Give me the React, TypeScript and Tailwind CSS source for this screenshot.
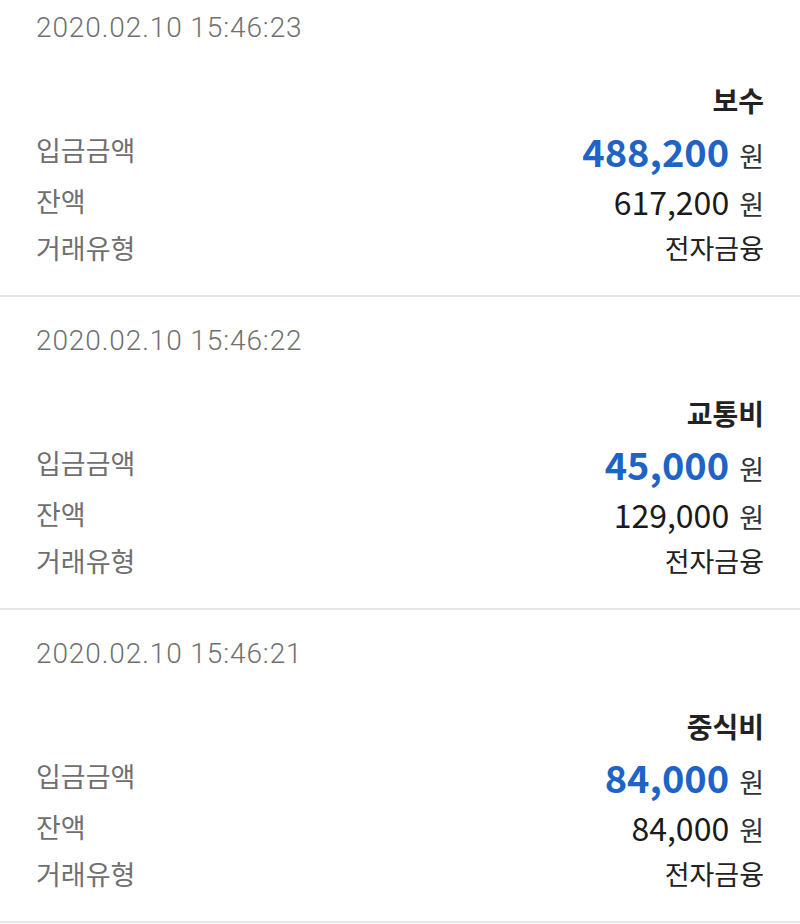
import React from "react";

type Item = { date: string; title: string; amount: string; balance: string; kind: string };

const items: Item[] = [
  { date: "2020.02.10 15:46:23", title: "보수", amount: "488,200", balance: "617,200", kind: "전자금융" },
  { date: "2020.02.10 15:46:22", title: "교통비", amount: "45,000", balance: "129,000", kind: "전자금융" },
  { date: "2020.02.10 15:46:21", title: "중식비", amount: "84,000", balance: "84,000", kind: "전자금융" },
];

const font = { fontFamily: '"Noto Sans CJK KR", "Noto Sans", sans-serif' };

function Section({ item, first }: { item: Item; first: boolean }) {
  return (
    <div className={`px-[36px] pb-[21px] border-b-2 border-[#e6e6e6] ${first ? "pt-[8px]" : "pt-[24px]"}`}>
      <div className="h-[40px] flex items-center text-[28px] text-[#707070] tracking-[0.9px]" style={{ fontFamily: "Roboto, sans-serif", fontWeight: 300 }}>
        {item.date}
      </div>
      <div className="mt-[32px] h-[40px] flex items-center justify-end text-[28px] font-bold text-[#222]">
        {item.title}
      </div>
      <div className="h-[60px] flex items-center justify-between">
        <span className="text-[27px] text-[#6f6f6f]">입금금액</span>
        <span className="flex items-baseline">
          <span className="text-[38px] font-bold text-[#1e63c6]">{item.amount}</span>
          <span className="ml-[10px] text-[27px] text-[#333]">원</span>
        </span>
      </div>
      <div className="h-[42px] flex items-center justify-between">
        <span className="text-[27px] text-[#6f6f6f]">잔액</span>
        <span className="flex items-baseline">
          <span className="text-[32px] text-[#1a1a1a]">{item.balance}</span>
          <span className="ml-[10px] text-[27px] text-[#333]">원</span>
        </span>
      </div>
      <div className="h-[52px] flex items-center justify-between">
        <span className="text-[27px] text-[#6f6f6f]">거래유형</span>
        <span className="text-[27px] text-[#222]">{item.kind}</span>
      </div>
    </div>
  );
}

export default function App() {
  return (
    <div className="w-[800px] h-[924px] overflow-hidden bg-white" style={font}>
      {items.map((it, i) => (
        <Section key={i} item={it} first={i === 0} />
      ))}
    </div>
  );
}
